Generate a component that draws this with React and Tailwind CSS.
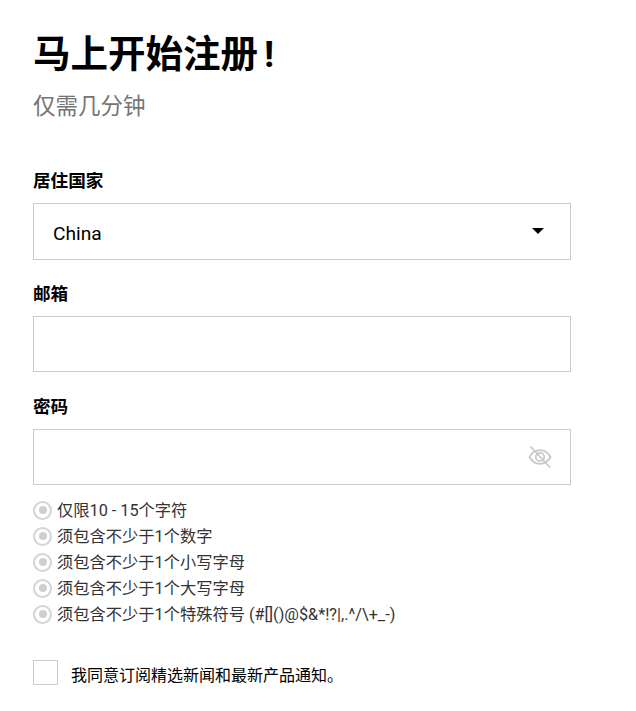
const rules = [
  "仅限10 - 15个字符",
  "须包含不少于1个数字",
  "须包含不少于1个小写字母",
  "须包含不少于1个大写字母",
  "须包含不少于1个特殊符号 (#[]()@$&*!?|,.^/\\+_-)",
]

function EyeSlash() {
  return (
    <svg width="24" height="24" viewBox="0 0 24 24" fill="none" stroke="#c8c8c8" strokeWidth="1.8">
      <path d="M1.5 12C4 7.5 7.8 5.2 12 5.2s8 2.3 10.5 6.8c-2.5 4.5-6.3 6.8-10.5 6.8S4 16.500 1.500 12z" />
      <circle cx="12" cy="12" r="4.200" />
      <path d="M2.500 1.500l19.500 21" />
    </svg>
  )
}

function Rule({ text }) {
  return (
    <li className="flex items-center h-[26px]">
      <span className="w-[19px] h-[19px] rounded-full border-2 border-[#d4d4d4] flex items-center justify-center shrink-0">
        <span className="w-[8px] h-[8px] rounded-full bg-[#cfcfcf]" />
      </span>
      <span className="ml-[5px] mt-[3px] text-[16.25px] text-[#333]">{text}</span>
    </li>
  )
}

function App() {
  return (
    <div className="min-h-[711px] bg-white text-black pl-[33px] w-[571px] font-['Roboto','Noto_Sans_CJK_SC',sans-serif]">
      <h1 className="pt-[28px] text-[37.5px] leading-[52px] font-bold">
        马上开始注册<span className="ml-[6px]">!</span>
      </h1>

      <p className="mt-[9px] text-[22.5px] leading-[34px] text-[#757575]">
        仅需几分钟
      </p>

      <form className="mt-[46px]">
        <label className="block text-[17.6px] leading-[24px] font-bold">
          居住国家
        </label>
        <div className="mt-[10px] h-[57px] border border-[#ccc] flex items-center justify-between pl-[19px] pr-[26px]">
          <span className="text-[19.2px] mt-[5px]">China</span>
          <span className="w-0 h-0 border-x-[6px] border-x-transparent border-t-[6px] border-t-black mb-[2px]" />
        </div>

        <label className="block mt-[22px] text-[17.6px] leading-[24px] font-bold">
          邮箱
        </label>
        <input
          type="email"
          className="block mt-[10px] w-full h-[56px] border border-[#ccc] px-[20px]"
        />

        <label className="block mt-[23px] text-[17.6px] leading-[24px] font-bold">
          密码
        </label>
        <div className="mt-[10px] h-[56px] border border-[#ccc] flex items-center justify-end pr-[18px]">
          <EyeSlash />
        </div>

        <ul className="mt-[12px]">
          {rules.map((r) => (
            <Rule key={r} text={r} />
          ))}
        </ul>

        <div className="mt-[33px] flex items-start">
          <span className="w-[25px] h-[25px] border border-[#ccc] shrink-0" />
          <span className="ml-[13px] text-[16px] leading-[24px] mt-[4px]">
            我同意订阅精选新闻和最新产品通知。
          </span>
        </div>
      </form>
    </div>
  )
}

export default App
